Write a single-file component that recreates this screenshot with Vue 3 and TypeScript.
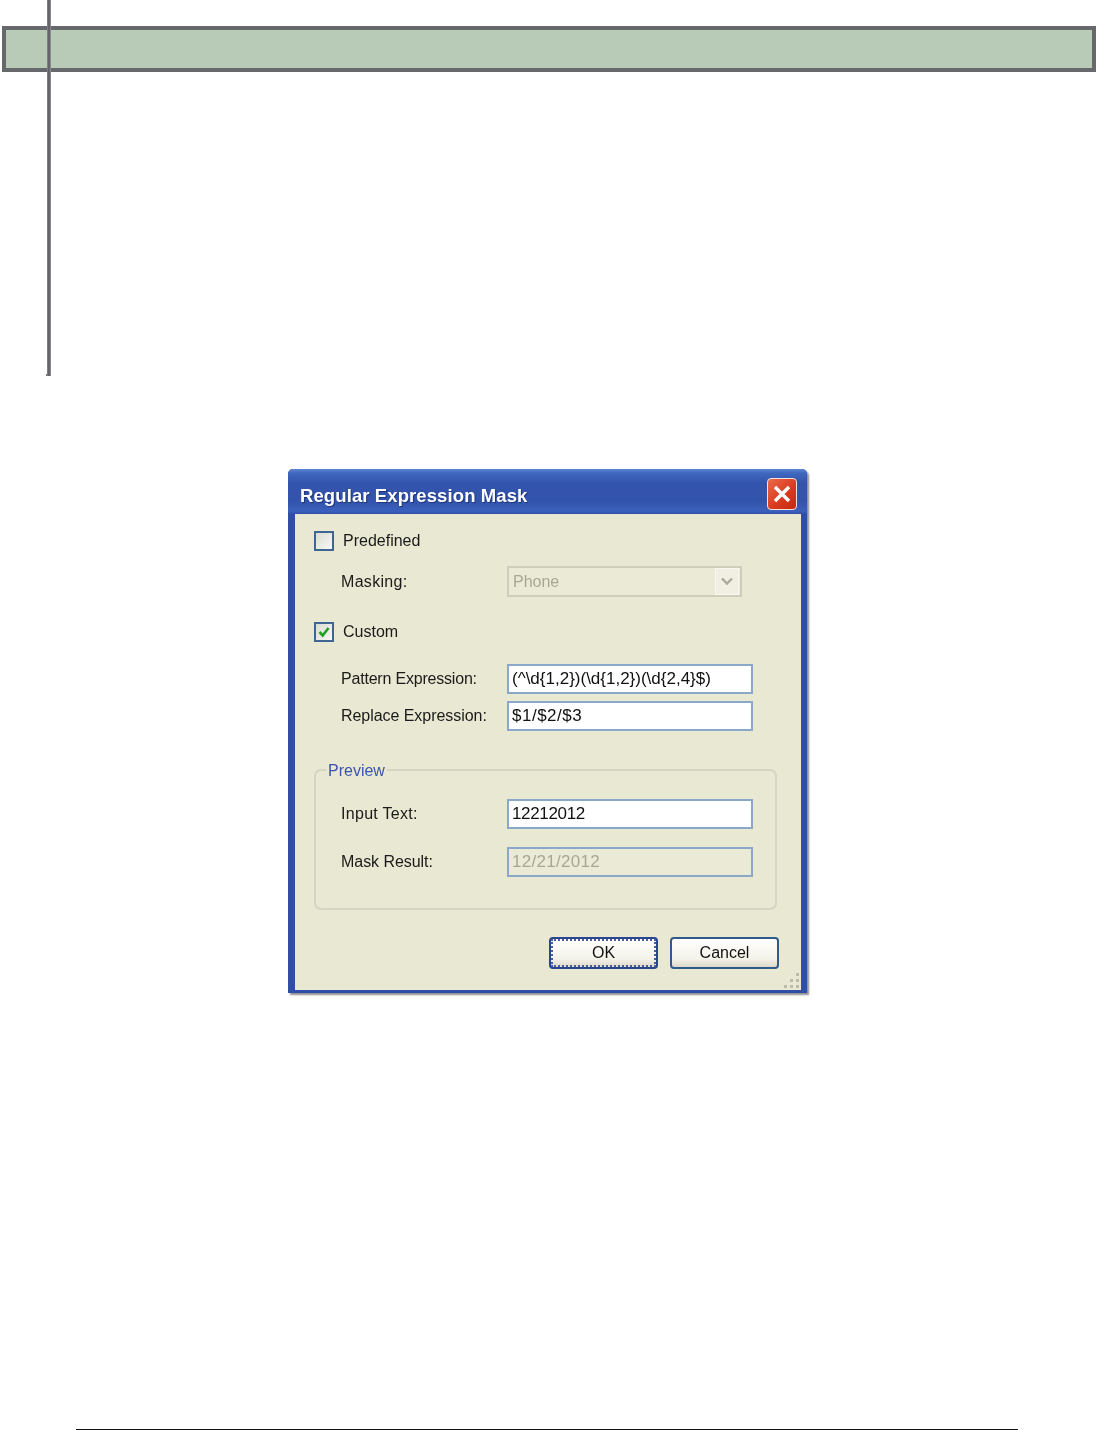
<script setup lang="ts">
const dots: [number, number][] = [[12,0],[12,6],[6,6],[12,12],[6,12],[0,12]]
</script>

<template>
  <div class="page">
    <div class="rule"></div>
    <div class="band"></div>

    <div class="window">
      <div class="titlebar">
        <span class="title">Regular Expression Mask</span>
        <div class="close">
          <svg width="22" height="22" viewBox="0 0 22 22"><path d="M4 4 L18 18 M18 4 L4 18" stroke="#fff" stroke-width="3.4" fill="none"/></svg>
        </div>
      </div>
      <div class="body">
        <div class="check-row">
          <span class="box"></span>
          <span class="text">Predefined</span>
        </div>
        <div class="field masking">
          <span class="label roomy">Masking:</span>
          <div class="select">
            <span>Phone</span>
            <div class="arrow">
              <svg width="14" height="11" viewBox="0 0 14 11"><path d="M2 2.5 L7 7.5 L12 2.5" stroke="#a9a99c" stroke-width="2.4" fill="none"/></svg>
            </div>
          </div>
        </div>
        <div class="check-row custom">
          <span class="box">
            <svg width="14" height="14" viewBox="0 0 14 14"><path d="M2.5 7 L5.7 10.5 L11.5 3" stroke="#21a121" stroke-width="2.6" fill="none"/></svg>
          </span>
          <span class="text">Custom</span>
        </div>
        <div class="field pattern">
          <span class="label">Pattern Expression:</span>
          <div class="input">(^\d{1,2})(\d{1,2})(\d{2,4}$)</div>
        </div>
        <div class="field replace">
          <span class="label near">Replace Expression:</span>
          <div class="input wide">$1/$2/$3</div>
        </div>
        <div class="group">
          <span class="legend">Preview</span>
          <div class="field">
            <span class="label roomy">Input Text:</span>
            <div class="input tight">12212012</div>
          </div>
          <div class="field result">
            <span class="label near">Mask Result:</span>
            <div class="input disabled">12/21/2012</div>
          </div>
        </div>
        <div class="buttons">
          <div class="btn ok"><span class="focus">OK</span></div>
          <div class="btn cancel">Cancel</div>
        </div>
        <svg class="grip" width="16" height="16" viewBox="0 0 16 16">
          <rect v-for="(d, i) in dots" :key="i" :x="d[0]" :y="d[1]" width="3" height="3" fill="#bdbca8" />
        </svg>
      </div>
    </div>

    <div class="foot"></div>
  </div>
</template>

<style scoped>
.page {
  position: relative;
  width: 1097px;
  height: 1430px;
  overflow: hidden;
  background: #fff;
  display: flow-root;
  font-family: "Liberation Sans", Arial, sans-serif;
}
.rule {
  position: absolute;
  left: 47px;
  top: 0;
  width: 4px;
  height: 376px;
  background: linear-gradient(90deg, #8f9195, #63656a 30%, #63656a 70%, #a4a6a9);
}
.rule::after {
  content: "";
  position: absolute;
  left: -1px;
  bottom: 0;
  width: 2px;
  height: 2px;
  background: #7a7c80;
}
.band {
  box-sizing: border-box;
  margin: 26px 0 0 2px;
  width: 1094px;
  height: 46px;
  background: #b7cbb6;
  border: 4px solid #66686c;
}
.window {
  box-sizing: border-box;
  margin: 397px 0 0 288px;
  width: 519px;
  height: 524px;
  display: flex;
  flex-direction: column;
  background: #2f4ea8;
  border-radius: 5px 5px 0 0;
  box-shadow: 2px 2px 2px #8e8e8e;
  filter: blur(0.35px);
  padding: 0 6px 3px 7px;
}
.titlebar {
  display: flex;
  align-items: center;
  justify-content: space-between;
  box-sizing: border-box;
  height: 45px;
  margin: 0 -6px 0 -7px;
  padding: 5px 10px 0 12px;
  border-radius: 5px 5px 0 0;
  background: linear-gradient(#5d86d2 0, #3f68bf 4px, #3353ac 14px, #3353ac 32px, #3b60bd 42px, #3050a8 45px);
}
.title {
  margin-top: 4px;
  color: #fff;
  font-size: 18.5px;
  font-weight: 700;
  letter-spacing: 0.1px;
  text-shadow: 1px 1px 1px #1e3478;
}
.close {
  box-sizing: border-box;
  width: 30px;
  height: 32px;
  display: flex;
  align-items: center;
  justify-content: center;
  border: 1px solid #f2e4de;
  border-radius: 4px;
  background: linear-gradient(135deg, #ec6a4a, #d8391c 60%, #c22a12);
}
.body {
  position: relative;
  flex: 1;
  background: #e9e8d2;
  padding-top: 17px;
  font-size: 16px;
  color: #1a1a1a;
}
.check-row {
  display: flex;
  align-items: center;
  height: 20px;
  padding-left: 19px;
}
.custom {
  margin-top: 25px;
}
.box {
  box-sizing: border-box;
  width: 20px;
  height: 20px;
  display: flex;
  align-items: center;
  justify-content: center;
  border: 2px solid #3f6593;
  background: linear-gradient(135deg, #dcdcd4, #f8f8f4);
}
.text {
  margin-left: 9px;
}
.field {
  display: flex;
  align-items: center;
  padding-left: 46px;
  height: 30px;
}
.label {
  width: 166px;
  flex: none;
  letter-spacing: -0.2px;
}
.label.near {
  letter-spacing: -0.05px;
}
.label.roomy {
  letter-spacing: 0.3px;
}
.masking {
  height: 31px;
  margin-top: 15px;
}
.pattern {
  margin-top: 22px;
}
.replace {
  margin-top: 7px;
}
.select {
  box-sizing: border-box;
  width: 235px;
  height: 31px;
  display: flex;
  align-items: center;
  justify-content: space-between;
  padding: 0 1px 0 4px;
  border: 2px solid #cfcebb;
  background: #ebead6;
  color: #a8a797;
}
.arrow {
  width: 24px;
  height: 27px;
  display: flex;
  align-items: center;
  justify-content: center;
  background: #f0efe2;
  border: 1px solid #f8f8f2;
  box-sizing: border-box;
}
.input {
  box-sizing: border-box;
  width: 246px;
  height: 30px;
  display: flex;
  align-items: center;
  padding-left: 3px;
  border: 2px solid #8aa8c8;
  background: #fff;
  color: #111;
  font-size: 17px;
}
.input.wide {
  letter-spacing: 0.5px;
}
.input.tight {
  letter-spacing: -0.35px;
}
.input.disabled {
  background: #ebead6;
  color: #a8a797;
  letter-spacing: 0.3px;
}
.group {
  position: relative;
  box-sizing: border-box;
  margin: 38px 0 0 19px;
  width: 463px;
  height: 141px;
  padding-top: 28px;
  border: 2px solid #d6d5c1;
  border-radius: 7px;
}
.group .field {
  padding-left: 25px;
}
.group .result {
  margin-top: 18px;
}
.legend {
  position: absolute;
  left: 10px;
  top: -10px;
  padding: 0 2px;
  background: #e9e8d2;
  color: #3a55b0;
  line-height: 20px;
}
.buttons {
  display: flex;
  gap: 12px;
  margin: 27px 0 0 254px;
}
.btn {
  box-sizing: border-box;
  width: 109px;
  height: 32px;
  display: flex;
  align-items: center;
  justify-content: center;
  border: 2px solid #2f5a8c;
  border-radius: 4px;
  background: linear-gradient(#ffffff, #f4f3ea 70%, #dcd9ca);
  color: #111;
}
.btn.ok {
  border-color: #27468f;
}
.focus {
  flex: 1;
  align-self: stretch;
  display: flex;
  align-items: center;
  justify-content: center;
  border: 2px dotted #4a5f9a;
}
.grip {
  position: absolute;
  right: 1px;
  bottom: 1px;
}
.foot {
  margin: 436px 0 0 76px;
  width: 942px;
  height: 1px;
  background: #111;
}
</style>
